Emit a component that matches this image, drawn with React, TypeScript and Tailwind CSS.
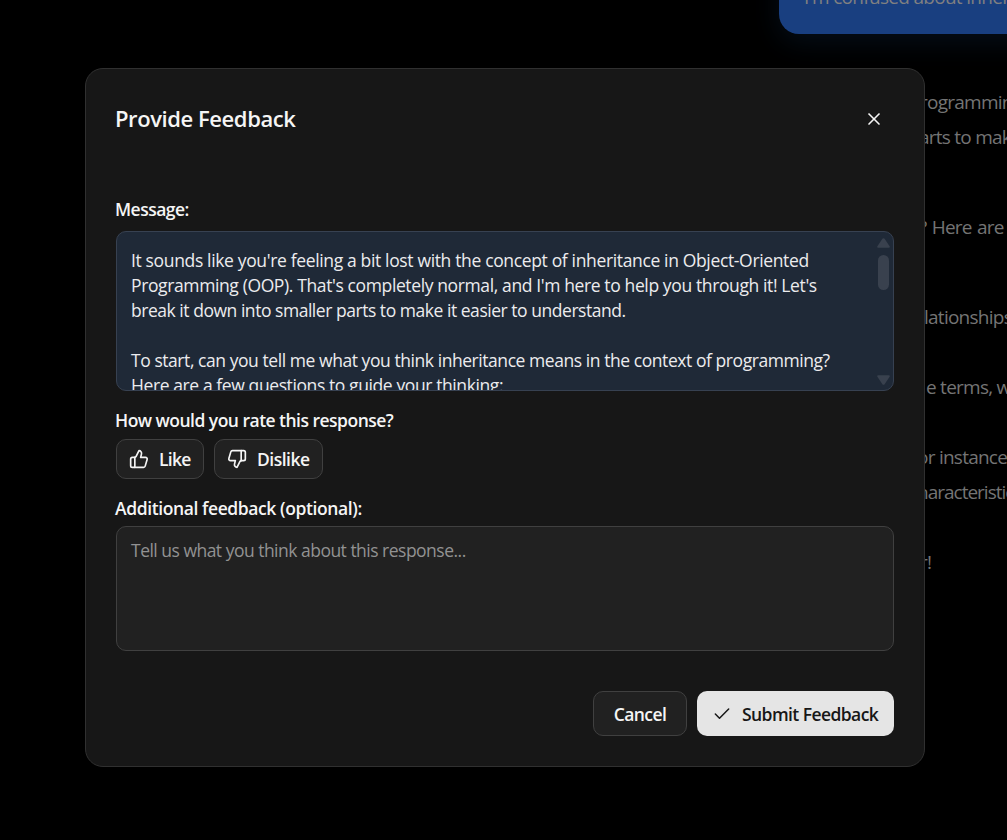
import type { ReactNode } from 'react';
import { Check, ThumbsDown, ThumbsUp, X } from 'lucide-react';

const conversation = [
  { text: 'rogramming', className: 'pl-[920px]' },
  { text: 'arts to make', className: 'pl-[919px]' },
  { text: '? Here are', className: 'mt-[55px] pl-[919px] [word-spacing:1px]' },
  { text: 'lationships', className: 'mt-[55px] pl-[924px]' },
  { text: 'e terms, we', className: 'mt-[35px] pl-[926px]' },
  { text: 'or instance,', className: 'mt-[35px] pl-[917px]' },
  { text: 'haracteristics', className: 'pl-[917px] tracking-[-1px]' },
  { text: 'r!', className: 'mt-[35px] pl-[920px]' },
];

const message = [
  { text: "It sounds like you're feeling a bit lost with the concept of inheritance in Object-Oriented", className: 'tracking-[-0.35px]' },
  { text: "Programming (OOP). That's completely normal, and I'm here to help you through it! Let's", className: 'tracking-[-0.38px]' },
  { text: 'break it down into smaller parts to make it easier to understand.', className: 'tracking-[-0.465px]' },
  { text: '', className: '' },
  { text: 'To start, can you tell me what you think inheritance means in the context of programming?', className: 'tracking-[-0.44px]' },
  { text: 'Here are a few questions to guide your thinking:', className: 'tracking-[-0.4px]' },
];

function Label({ children, className }: { children: ReactNode; className: string }) {
  return (
    <div className={`-ml-px flex h-[22px] items-center pb-[2px] text-[17.5px] font-semibold leading-[20px] ${className}`}>
      <span>{children}</span>
    </div>
  );
}

function Scrollbar() {
  return (
    <div className="flex w-[19px] shrink-0 flex-col items-center pt-[6px] pb-[5px]">
      <svg width="13" height="10" viewBox="0 0 13 10" className="fill-[#39414e]">
        <path d="M5.4.8a1.3 1.3 0 0 1 2.2 0l5 7.4c.5.8.2 1.6-.8 1.6H1.200c-1 0-1.300-.8-.8-1.600z" />
      </svg>
      <div className="mt-[7px] h-[35px] w-[11px] rounded-full bg-[#39414e]" />
      <svg width="13" height="10" viewBox="0 0 13 10" className="mt-auto rotate-180 fill-[#39414e]">
        <path d="M5.4.8a1.3 1.3 0 0 1 2.2 0l5 7.4c.5.8.2 1.6-.8 1.6H1.200c-1 0-1.300-.8-.8-1.600z" />
      </svg>
    </div>
  );
}

export default function App() {
  return (
    <div className="relative h-[840px] w-[1007px] overflow-hidden bg-black font-['Open_Sans','Noto_Sans',sans-serif]">
      <main className="flex h-full flex-col whitespace-nowrap text-[19px] leading-[35px] tracking-[-0.75px] text-[#747474]">
        <div className="-mt-10 ml-[779px] flex h-[74px] w-[300px] shrink-0 items-start rounded-[20px] bg-[#193f80] pt-5 pl-[25px] tracking-[-0.7px] text-[#808080] shadow-[0_8px_28px_rgba(25,63,110,0.22)]">
          I'm confused about inheritance
        </div>
        <div className="mt-[51px] flex flex-col">
          {conversation.map((line) => (
            <p key={line.text} className={line.className}>{line.text}</p>
          ))}
        </div>
      </main>

      <div className="absolute inset-0 flex items-start justify-center pt-[68px] pl-[3px]">
        <section role="dialog" className="flex h-[699px] w-[840px] flex-col whitespace-nowrap rounded-[18px] border border-[#303030] bg-[#171717] px-[30px] text-[#f5f5f5]">
          <header className="mt-[25px] flex h-[50px] items-center justify-between pr-[12px]">
            <h1 className="-mt-[2px] -ml-px text-[22px] font-semibold leading-[30px] tracking-[-0.42px]">Provide Feedback</h1>
            <button aria-label="Close" className="flex size-4 items-center justify-center">
              <X size={20} strokeWidth={2} className="shrink-0" />
            </button>
          </header>

          <Label className="mt-[55px] tracking-[-0.53px]">Message:</Label>
          <div className="mt-[10px] flex h-[160px] shrink-0 overflow-hidden rounded-[10px] border border-[#374151] bg-[#1f2937]">
            <div className="h-full min-w-0 flex-1 overflow-hidden pt-4 pl-[14px] text-[17.5px] leading-[25px] text-[#ececee]">
              {message.map((line, i) => (
                <p key={i} className={`h-[25px] ${line.className}`}>{line.text}</p>
              ))}
            </div>
            <Scrollbar />
          </div>

          <Label className="mt-[19px] tracking-[-0.52px]">How would you rate this response?</Label>
          <div className="mt-[7px] flex h-10 gap-[10px]">
            <button className="flex w-[88px] items-center gap-[10px] rounded-[10px] border border-[#404040] bg-[#212121] pl-[12px] text-[17.5px] font-semibold tracking-[-0.7px]">
              <ThumbsUp size={20} strokeWidth={2} />
              <span>Like</span>
            </button>
            <button className="flex w-[109px] items-center gap-[10px] rounded-[10px] border border-[#404040] bg-[#212121] pl-[12px] text-[17.5px] font-semibold tracking-[-0.5px]">
              <ThumbsDown size={20} strokeWidth={2} />
              <span>Dislike</span>
            </button>
          </div>

          <Label className="mt-[19px] tracking-[-0.4px]">Additional feedback (optional):</Label>
          <textarea
            placeholder="Tell us what you think about this response..."
            className="mt-[6px] block h-[125px] shrink-0 resize-none rounded-[10px] border border-[#404040] bg-[#212121] px-[14px] pt-[11px] text-[17.5px] leading-[25px] tracking-[-0.51px] outline-none placeholder:text-[#929292]"
          />

          <footer className="mt-10 flex h-[45px] justify-end gap-[10px] text-[17.5px] font-semibold">
            <button className="flex w-[94px] items-center justify-center rounded-[10px] border border-[#404040] bg-[#212121] pt-[2px] tracking-[-0.6px]">Cancel</button>
            <button className="flex w-[197px] items-center gap-[10px] rounded-[10px] bg-[#e5e5e5] pl-[15px] tracking-[-0.57px] text-[#171717]">
              <Check size={20} strokeWidth={1.8} />
              <span className="pt-[2px]">Submit Feedback</span>
            </button>
          </footer>
        </section>
      </div>
    </div>
  );
}
